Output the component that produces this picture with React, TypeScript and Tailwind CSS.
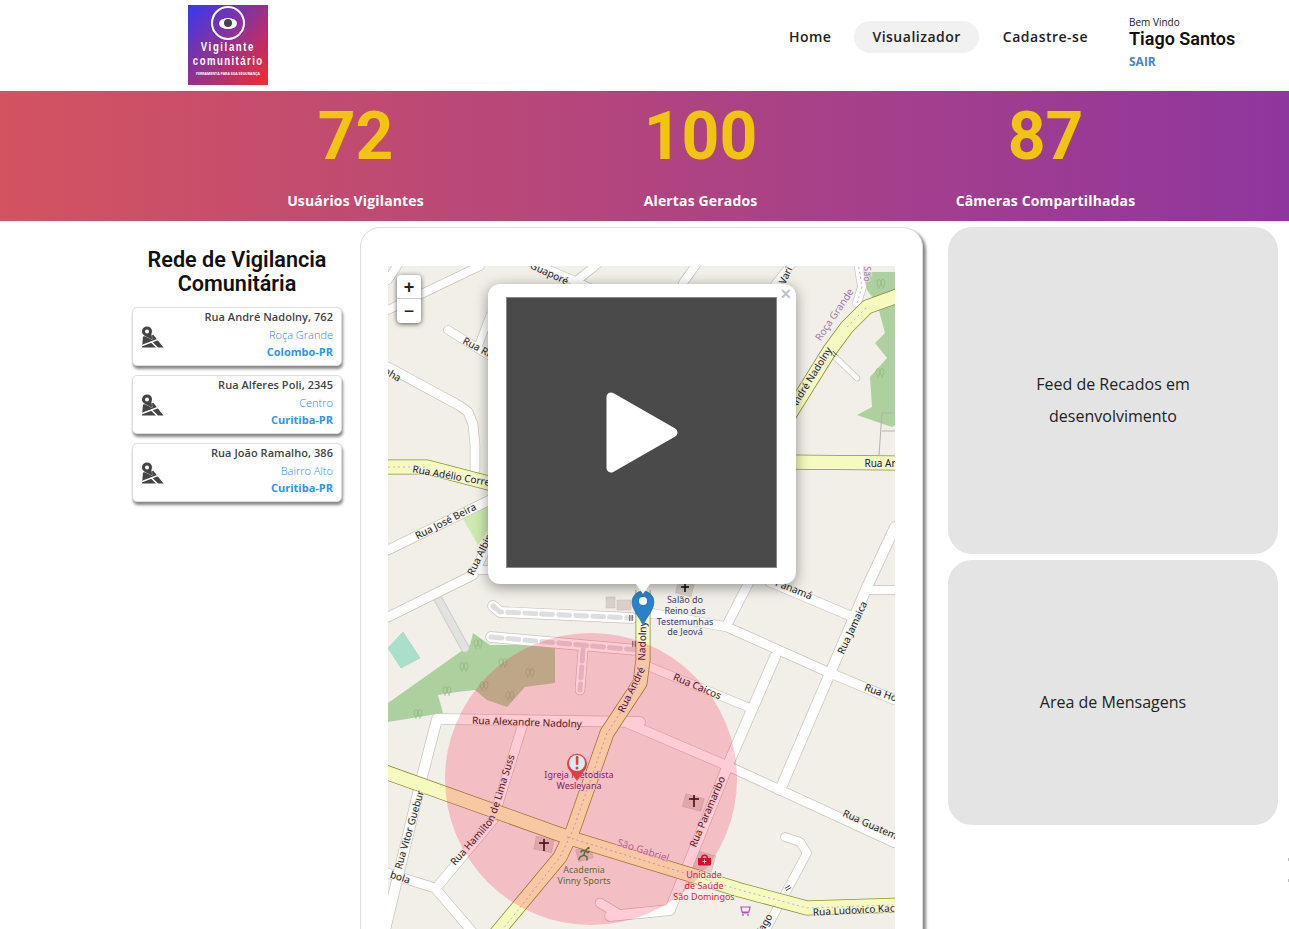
import React from 'react';

const alerts = [
  { street: 'Rua André Nadolny, 762', area: 'Roça Grande', city: 'Colombo-PR' },
  { street: 'Rua Alferes Poli, 2345', area: 'Centro', city: 'Curitiba-PR' },
  { street: 'Rua João Ramalho, 386', area: 'Bairro Alto', city: 'Curitiba-PR' },
];

const stats = [
  { value: '72', label: 'Usuários Vigilantes' },
  { value: '100', label: 'Alertas Gerados' },
  { value: '87', label: 'Câmeras Compartilhadas' },
];

// map roads, in page coordinates (the svg viewBox starts at the map corner)
const whiteRoads: [string, number][] = [
  ['388,310 480,266', 8],
  ['388,280 397,266', 8],
  ['530,262 573,280 590,288', 8],
  ['600,262 575,282', 8],
  ['683,283 698,262', 8],
  ['775,285 793,262', 8],
  ['448,330 500,362', 8],
  ['478,347 490,315', 7],
  ['388,367 460,406 468,412 473,424 475,445 475,470', 9],
  ['388,550 500,495', 9],
  ['388,617 473,575 495,530', 9],
  ['473,570 500,570', 8],
  ['858,262 862,287 857,303', 8],
  ['833,355 857,378', 5],
  ['895,527 867,587 780,790', 10],
  ['870,590 895,590', 8],
  ['770,582 853,617', 9],
  ['650,613 727,627 830,673 895,700', 9],
  ['750,580 728,623', 9],
  ['775,657 730,760 670,910 610,916', 10],
  ['650,667 750,708', 8],
  ['627,723 660,737 730,767 895,843', 9],
  ['785,837 800,842 807,853 763,935', 8],
  ['640,722 437,719 422,777 385,930', 10],
  ['522,727 493,820 437,887', 9],
  ['384,872 435,888 475,935', 9],
  ['600,903 620,915 670,910', 9],
  ['583,650 580,690', 9],
  ['493,606 500,612 632,618', 10],
  ['491,637 637,650', 10],
];

const yellowRoads = [
  '388,467 427,467 500,486',
  '780,430 830,350 847,327 867,307 900,295',
  '780,462 900,463',
  '385,772 567,837 740,890 807,908 900,905',
  '643,590 643,660 640,683 607,733 573,830 560,857 495,935',
];

const dashedRoads = ['493,606 500,612 632,618', '491,637 637,650', '583,650 580,690'];
const dottedRoads = [
  '388,467 427,467',
  '847,327 867,307',
  '858,262 862,287 857,303',
  '640,683 607,733 573,830 560,857 503,929',
  '567,837 740,890 807,908 895,905',
];

const trees = [
  [881, 283],
  [880, 372],
  [478, 643],
  [464, 666],
  [503, 662],
  [530, 672],
  [484, 685],
  [510, 695],
  [418, 713],
  [447, 690],
];

const Label = ({
  x,
  y,
  r = 0,
  fill = '#222',
  size = 10,
  children,
}: {
  x: number;
  y: number;
  r?: number;
  fill?: string;
  size?: number;
  children: React.ReactNode;
}) => (
  <text
    x={x}
    y={y}
    fontSize={size}
    fill={fill}
    textAnchor="middle"
    dominantBaseline="middle"
    transform={r ? `rotate(${r} ${x} ${y})` : undefined}
    stroke="#f2efe9"
    strokeOpacity={0.75}
    strokeWidth={2}
    className="[paint-order:stroke]"
  >
    {children}
  </text>
);

const OneWay = ({ x, y, r }: { x: number; y: number; r: number }) => (
  <g transform={`translate(${x} ${y}) rotate(${r})`} stroke="#333" strokeWidth={0.8}>
    <line x1={-3} y1={-1.2} x2={3} y2={-1.2} />
    <line x1={-3} y1={1.2} x2={3} y2={1.2} />
  </g>
);

const MapDrawing = () => (
  <svg
    viewBox="388 266 507 663"
    width={507}
    height={663}
    className="block font-['Noto_Sans',sans-serif]"
  >
    <rect x={388} y={266} width={507} height={663} fill="#f2efe9" />

    {/* woods and grass */}
    <polygon
      points="862,272 895,272 895,425 892,427 880,423 857,415 872,407 870,377 887,358 875,343 885,333 877,303 867,290"
      fill="#add19e"
    />
    <polygon
      points="473,633 490,645 555,645 555,683 525,687 507,707 487,700 475,690 457,692 438,695 443,713 388,722 388,703 470,645"
      fill="#add19e"
    />
    <polygon points="462,517 490,504 490,527 478,545" fill="#cdebb0" />
    <polygon points="403,632 420,658 401,668 388,648" fill="#aae0cb" stroke="#9ccdb8" strokeWidth={0.5} />
    <polyline points="895,413 882,413 879,455" fill="none" stroke="#b5b2ac" strokeWidth={1} />
    <line x1={882} y1={431} x2={895} y2={431} stroke="#b5b2ac" strokeWidth={1} />
    <polyline points="437,597 465,648" fill="none" stroke="#d0cdc6" strokeWidth={9} strokeLinecap="round" />
    <polyline points="437,597 465,648" fill="none" stroke="#e2e2e2" strokeWidth={7} strokeLinecap="round" />

    {/* buildings */}
    <g fill="#d9d0c9" stroke="#c4b8ae" strokeWidth={0.5}>
      <rect x={606} y={597} width={9} height={11} />
      <rect x={617} y={600} width={14} height={10} />
      <rect x={535} y={838} width={18} height={13} transform="rotate(12 544 844)" />
      <rect x={577} y={848} width={15} height={12} transform="rotate(-15 584 854)" />
      <rect x={684} y={796} width={19} height={13} transform="rotate(15 693 802)" />
      <rect x={695} y={853} width={19} height={17} transform="rotate(15 704 861)" />
      <rect x={677} y={581} width={16} height={14} transform="rotate(15 685 588)" />
    </g>

    {/* roads: casings first, then the inner colour */}
    {whiteRoads.map(([pts, w], i) => (
      <polyline
        key={`c${i}`}
        points={pts}
        fill="none"
        stroke="#c8c4bc"
        strokeWidth={w + 1.4}
        strokeLinecap="round"
        strokeLinejoin="round"
      />
    ))}
    {whiteRoads.map(([pts, w], i) => (
      <polyline
        key={`w${i}`}
        points={pts}
        fill="none"
        stroke="#fff"
        strokeWidth={w}
        strokeLinecap="round"
        strokeLinejoin="round"
      />
    ))}
    {dashedRoads.map((pts) => (
      <polyline
        key={pts}
        points={pts}
        fill="none"
        stroke="#dedede"
        strokeWidth={5}
        strokeDasharray="11 6"
        strokeLinecap="round"
      />
    ))}
    {yellowRoads.map((pts) => (
      <polyline key={`yc${pts}`} points={pts} fill="none" stroke="#8a9437" strokeWidth={15} strokeLinejoin="round" />
    ))}
    {yellowRoads.map((pts) => (
      <polyline key={`y${pts}`} points={pts} fill="none" stroke="#f7fabf" strokeWidth={13.4} strokeLinejoin="round" />
    ))}
    {dottedRoads.map((pts) => (
      <polyline
        key={`d${pts}`}
        points={pts}
        fill="none"
        stroke="#c8a9d2"
        strokeWidth={1}
        strokeDasharray="2 3"
      />
    ))}

    <OneWay x={834} y={354} r={45} />
    <OneWay x={631} y={618} r={90} />
    <OneWay x={634} y={644} r={90} />
    <OneWay x={788} y={888} r={-30} />

    {/* tree marks */}
    <g fill="none" stroke="#8fb781" strokeWidth={0.8}>
      {trees.map(([x, y]) => (
        <g key={`${x}-${y}`}>
          <ellipse cx={x - 2} cy={y} rx={2} ry={3.5} />
          <ellipse cx={x + 2} cy={y} rx={2} ry={3.5} />
          <path d={`M${x - 2} ${y + 3.5}v2.5M${x + 2} ${y + 3.5}v2.5`} />
        </g>
      ))}
    </g>

    {/* street names */}
    <Label x={549} y={274} r={25}>Guaporé</Label>
    <Label x={479} y={349} r={28}>Rua Rio</Label>
    <Label x={392} y={375} r={30}>nha</Label>
    <Label x={454} y={477} r={10}>Rua Adélio Correa</Label>
    <Label x={446} y={522} r={-27}>Rua José Beira</Label>
    <Label x={482} y={552} r={-64}>Rua Albino</Label>
    <Label x={782} y={285} r={-65}>Rua Vari</Label>
    <Label x={835} y={315} r={-56} fill="#9a7aa8">Roça Grande</Label>
    <Label x={866} y={274} r={90} size={9} fill="#9a7aa8">São</Label>
    <Label x={806} y={387} r={-58}>Rua André Nadolny</Label>
    <Label x={889} y={464}>Rua Aruba</Label>
    <Label x={784} y={586} r={22}>Rua Panamá</Label>
    <Label x={853} y={628} r={-65}>Rua Jamaica</Label>
    <Label x={896} y={699} r={20}>Rua Honduras</Label>
    <Label x={697} y={687} r={23}>Rua Caicos</Label>
    <Label x={876} y={828} r={24}>Rua Guatemala</Label>
    <Label x={708} y={812} r={-67}>Rua Paramaribo</Label>
    <Label x={871} y={910} r={-3}>Rua Ludovico Kaczmarek</Label>
    <Label x={632} y={690} r={-64}>Rua André</Label>
    <Label x={643} y={641} r={-88}>Nadolny</Label>
    <Label x={527} y={723} r={2}>Rua Alexandre Nadolny</Label>
    <Label x={410} y={830} r={-74}>Rua Vitor Guebur</Label>
    <Label x={400} y={878} r={18}>bola</Label>
    <Label x={760} y={933} r={-60}>Rua Iago</Label>
    <Label x={643} y={851} r={18} fill="#a878a8">São Gabriel</Label>
    <text fontSize={10} fill="#222" stroke="#f2efe9" strokeOpacity={0.75} strokeWidth={2} className="[paint-order:stroke]">
      <textPath href="#hamilton">Rua Hamilton de Lima Suss</textPath>
    </text>
    <defs>
      <path id="hamilton" d="M455 866 L491 825 Q495 820 497 812 L515 755" />
    </defs>

    {/* places */}
    <g>
      <Label x={685} y={601} size={9} fill="#3c3c78">Salão do</Label>
      <Label x={685} y={612} size={9} fill="#3c3c78">Reino das</Label>
      <Label x={685} y={623} size={9} fill="#3c3c78">Testemunhas</Label>
      <Label x={685} y={633} size={9} fill="#3c3c78">de Jeová</Label>
      <Label x={579} y={776} size={9} fill="#5c2f7c">Igreja Metodista</Label>
      <Label x={579} y={787} size={9} fill="#5c2f7c">Wesleyana</Label>
      <Label x={584} y={871} size={9} fill="#39843a">Academia</Label>
      <Label x={584} y={882} size={9} fill="#39843a">Vinny Sports</Label>
      <Label x={704} y={876} size={9} fill="#d81f3c">Unidade</Label>
      <Label x={704} y={887} size={9} fill="#d81f3c">de Saúde</Label>
      <Label x={704} y={898} size={9} fill="#d81f3c">São Domingos</Label>
    </g>

    {/* place icons */}
    <g stroke="#111" strokeWidth={1.6}>
      <line x1={544} y1={839} x2={544} y2={851} />
      <line x1={539} y1={843} x2={549} y2={843} />
      <line x1={694} y1={795} x2={694} y2={807} />
      <line x1={689} y1={799} x2={699} y2={799} />
      <line x1={685} y1={584} x2={685} y2={592} />
      <line x1={681} y1={587} x2={689} y2={587} />
    </g>
    <path
      d="M588 848l-3 3-3-.5-1.5 2M585 851l-1 4-4 2-1.5 3M584 855l3 2 0 3.5M585 851l3 1.5 1.5-1.5"
      fill="none"
      stroke="#39843a"
      strokeWidth={1.5}
    />
    <circle cx={588.5} cy={848} r={1.2} fill="#39843a" />
    <path d="M698 858h13v6a1.5 1.5 0 0 1-1.5 1.5h-10a1.5 1.5 0 0 1-1.5-1.5zM701 858a3.5 3.5 0 0 1 7 0h-1.5a2 2 0 0 0-4 0z" fill="#d40c2a" />
    <path d="M704.5 859.5v4M702.5 861.5h4" stroke="#fff" strokeWidth={1} />
    <path d="M741 907h9l-1 5h-7zM742 913h6.5" fill="none" stroke="#b84fc0" strokeWidth={1.2} />
    <circle cx={743} cy={915} r={0.9} fill="#b84fc0" />
    <circle cx={748} cy={915} r={0.9} fill="#b84fc0" />

    {/* alert radius */}
    <circle cx={591} cy={779} r={146} fill="#ff0033" fillOpacity={0.2} />

    {/* alert marker */}
    <path d="M577 781l-7-10a10 10 0 1 1 14 0z" fill="#e93d45" />
    <circle cx={577} cy={763} r={8} fill="#d4eef5" />
    <rect x={575.8} y={756} width={2.6} height={9} rx={1.2} fill="#e93d45" />
    <circle cx={577} cy={768} r={1.5} fill="#e93d45" />

    {/* position marker */}
    <path
      d="M643 625c-3-7-11-15-11-23a11 11 0 0 1 22 0c0 8-8 16-11 23z"
      fill="#2a81cb"
      stroke="#1f6cae"
      strokeWidth={0.6}
    />
    <circle cx={643} cy={601} r={4} fill="#fff" />
  </svg>
);

const PinMapIcon = () => (
  <svg viewBox="0 0 22 22" className="w-[22px] h-[22px] shrink-0">
    <path d="M1 10.5 11.5 9 21.5 21.5H0z" fill="#444" />
    <path d="M0 19.5 18.5 12.5M9 15.5l6.5 6.5" stroke="#fff" strokeWidth={1.5} fill="none" />
    <path
      fillRule="evenodd"
      d="M5 .4a5 5 0 0 1 5 5c0 1-.3 1.8-.6 2.5L10 13.4 2.3 9.6A5 5 0 0 1 5 .4zm0 3a2 2 0 1 0 0 4 2 2 0 0 0 0-4z"
      fill="#444"
      stroke="#fff"
      strokeWidth={0.7}
      paintOrder="stroke"
    />
  </svg>
);

const NavLink = ({ label, active }: { label: string; active?: boolean }) => (
  <a
    className={
      active
        ? 'px-[18px] h-8 pb-[2px] flex items-center rounded-full bg-[#f1f1f1] text-[14px] font-semibold tracking-[0.5px] text-[#222]'
        : 'px-[18px] h-8 pb-[2px] flex items-center rounded-full text-[14px] font-semibold tracking-[0.5px] text-[#222]'
    }
  >
    {label}
  </a>
);

export default function App() {
  return (
    <div className="relative h-[929px] overflow-hidden bg-white font-['Open_Sans',sans-serif]">
      <header className="h-[91px] flex items-start">
        <div className="ml-[188px] mt-[5px] w-20 h-20 bg-linear-to-br/srgb from-[#3439f0] to-[#f72a2a] flex flex-col items-center text-white overflow-hidden">
          <div className="mt-[1px] w-[34px] h-[34px] rounded-full border-2 border-white flex items-center justify-center">
            <div className="w-[18px] h-[11px] rounded-[50%] bg-white flex items-center justify-center">
              <div className="w-[8px] h-[8px] rounded-full bg-[#444]" />
            </div>
          </div>
          <div className="mt-[1px] text-[12px] leading-[12px] font-bold tracking-[2px] scale-x-[0.8] font-['Liberation_Sans',sans-serif] whitespace-nowrap">
            Vigilante
          </div>
          <div className="mt-[2px] text-[12px] leading-[12px] font-bold tracking-[1.8px] scale-x-[0.8] font-['Liberation_Sans',sans-serif] whitespace-nowrap">
            comunitário
          </div>
          <div className="mt-[4px] text-[3.5px] leading-[5px] font-bold whitespace-nowrap">
            FERRAMENTA PARA SUA SEGURANÇA
          </div>
        </div>
        <nav className="ml-auto mt-[21px] flex items-center gap-[6px]">
          <div className="-mr-px">
            <NavLink label="Home" />
          </div>
          <NavLink label="Visualizador" active />
          <NavLink label="Cadastre-se" />
        </nav>
        <div className="ml-[23px] mr-[54px] mt-[15px] w-[106px]">
          <div className="text-[10px] leading-[14px] text-[#222]">Bem Vindo</div>
          <div className="-mt-px text-[18px] leading-[21px] font-semibold font-['Roboto',sans-serif] text-[#111] whitespace-nowrap">
            Tiago Santos
          </div>
          <div className="mt-[6px] text-[12px] leading-[14px] font-bold text-[#4a86c8]">SAIR</div>
        </div>
      </header>

      <section className="h-[130px] bg-linear-to-r/srgb from-[#d35360] to-[#8f369e] pl-[183px]">
        <div className="w-[1035px] grid grid-cols-3">
          {stats.map((stat) => (
            <div key={stat.label} className="flex flex-col items-center">
              <div className="mt-[2px] h-[88px] leading-[88px] text-[66px] font-bold font-['Roboto',sans-serif] text-[#f1c40f]">
                {stat.value}
              </div>
              <div className="mt-[10px] text-[14px] leading-[20px] font-bold tracking-[0.15px] text-white">
                {stat.label}
              </div>
            </div>
          ))}
        </div>
      </section>

      <main className="flex items-start pl-[132px] pt-[6px]">
        <aside className="w-[210px] mr-[18px] pt-[21px]">
          <h2 className="text-center text-[21.6px] leading-[24px] font-semibold font-['Roboto',sans-serif] text-[#111]">
            Rede de Vigilancia Comunitária
          </h2>
          <div className="mt-[11px] flex flex-col gap-[9px]">
            {alerts.map((alert) => (
              <div
                key={alert.street}
                className="h-[59px] rounded-[5px] border border-[#ddd] bg-white shadow-[1px_3px_3px_#888] flex items-center justify-between pl-[9px] pr-[8px]"
              >
                <PinMapIcon />
                <div className="pb-[4px] text-right text-[11px] leading-[17.5px]">
                  <div className="font-semibold tracking-[0.05px] text-[#444]">{alert.street}</div>
                  <div className="font-light text-[#2b86f5]">{alert.area}</div>
                  <div className="font-bold text-[#2d95f3]">{alert.city}</div>
                </div>
              </div>
            ))}
          </div>
        </aside>

        <div className="w-[563px] h-[800px] mr-[25px] rounded-t-[20px] border border-[#ddd] bg-white shadow-[3px_3px_3px_#888] pt-[38px] px-[27px]">
          <div className="relative w-[507px] h-[663px] overflow-hidden">
            <MapDrawing />

            <div className="absolute left-[9px] top-[9px] w-6 rounded bg-white shadow-[0_1px_5px_rgba(0,0,0,0.65)] font-['Liberation_Sans',sans-serif] text-[#222]">
              <div className="h-6 pt-px flex items-center justify-center text-[18px] font-semibold border-b border-[#ccc]">+</div>
              <div className="h-6 pt-px flex items-center justify-center text-[18px] font-normal">−</div>
            </div>

            <div className="absolute left-[100px] top-[18px] w-[308px] h-[300px] rounded-xl bg-white shadow-[0_3px_14px_rgba(0,0,0,0.4)] pl-[18px] pt-[13px]">
              <span className="absolute right-[5px] top-[1px] text-[18px] leading-[18px] font-bold text-[#c3c3c3] font-['Liberation_Sans',sans-serif]">
                ×
              </span>
              <div className="w-[271px] h-[271px] bg-[#4a4a4a] border border-[#8a8a8a] flex items-center justify-center">
                <svg viewBox="0 0 72 81" width={72} height={81}>
                  <path d="M5 5 67 40.5 5 76z" fill="#fff" stroke="#fff" strokeWidth={9} strokeLinejoin="round" />
                </svg>
              </div>
              <div className="absolute left-[148px] top-[300px] w-0 h-0 border-x-[7px] border-x-transparent border-t-[10px] border-t-white" />
            </div>
          </div>
        </div>

        <div className="w-[330px] flex flex-col gap-[6px] text-[16px] text-[#222]">
          <div className="h-[327px] pt-[18px] rounded-[24px] bg-[#e4e4e4] flex items-center justify-center text-center leading-8 px-10">
            Feed de Recados em desenvolvimento
          </div>
          <div className="h-[265px] pt-[18px] rounded-[24px] bg-[#e4e4e4] flex items-center justify-center text-center leading-8">
            Area de Mensagens
          </div>
        </div>
      </main>

      {/* two specks at the page edge */}
      <span className="absolute right-0 top-[858px] w-px h-[3px] bg-[#bbb]" />
      <span className="absolute right-0 top-[879px] w-px h-[3px] bg-[#bbb]" />
    </div>
  );
}
